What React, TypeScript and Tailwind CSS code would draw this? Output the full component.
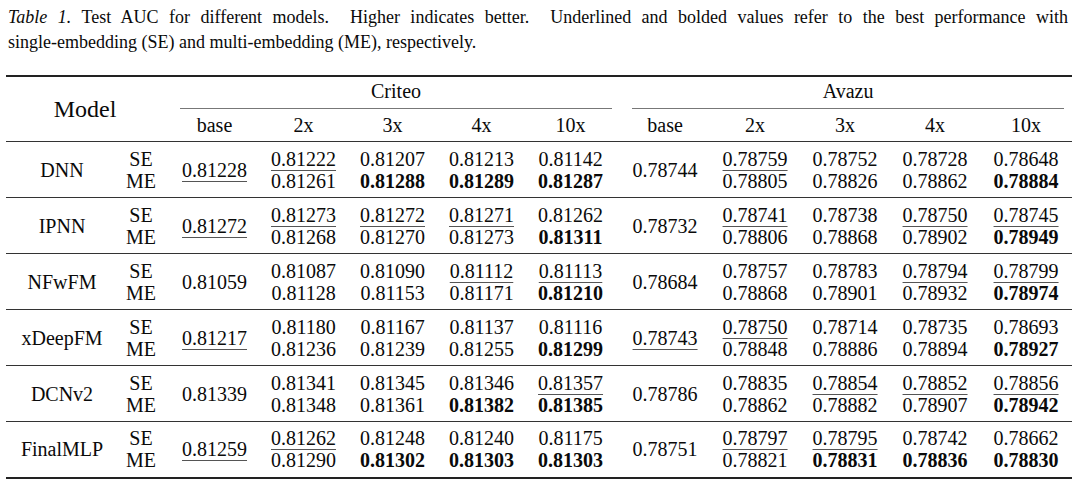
import React from "react";

type Row = {
  name: string;
  cBase: string;
  cSE: string[];
  cME: string[];
  aBase: string;
  aSE: string[];
  aME: string[];
};

const rows: Row[] = [
  {
    name: "DNN",
    cBase: "_0.81228",
    cSE: ["_0.81222", "0.81207", "0.81213", "0.81142"],
    cME: ["0.81261", "*0.81288", "*0.81289", "*0.81287"],
    aBase: "0.78744",
    aSE: ["_0.78759", "0.78752", "0.78728", "0.78648"],
    aME: ["0.78805", "0.78826", "0.78862", "*0.78884"],
  },
  {
    name: "IPNN",
    cBase: "_0.81272",
    cSE: ["_0.81273", "_0.81272", "_0.81271", "0.81262"],
    cME: ["0.81268", "0.81270", "0.81273", "*0.81311"],
    aBase: "0.78732",
    aSE: ["_0.78741", "0.78738", "_0.78750", "_0.78745"],
    aME: ["0.78806", "0.78868", "0.78902", "*0.78949"],
  },
  {
    name: "NFwFM",
    cBase: "0.81059",
    cSE: ["0.81087", "0.81090", "_0.81112", "_0.81113"],
    cME: ["0.81128", "0.81153", "0.81171", "*0.81210"],
    aBase: "0.78684",
    aSE: ["0.78757", "0.78783", "_0.78794", "_0.78799"],
    aME: ["0.78868", "0.78901", "0.78932", "*0.78974"],
  },
  {
    name: "xDeepFM",
    cBase: "_0.81217",
    cSE: ["0.81180", "0.81167", "0.81137", "0.81116"],
    cME: ["0.81236", "0.81239", "0.81255", "*0.81299"],
    aBase: "_0.78743",
    aSE: ["_0.78750", "0.78714", "0.78735", "0.78693"],
    aME: ["0.78848", "0.78886", "0.78894", "*0.78927"],
  },
  {
    name: "DCNv2",
    cBase: "0.81339",
    cSE: ["0.81341", "0.81345", "0.81346", "_0.81357"],
    cME: ["0.81348", "0.81361", "*0.81382", "*0.81385"],
    aBase: "0.78786",
    aSE: ["0.78835", "_0.78854", "_0.78852", "_0.78856"],
    aME: ["0.78862", "0.78882", "0.78907", "*0.78942"],
  },
  {
    name: "FinalMLP",
    cBase: "_0.81259",
    cSE: ["_0.81262", "0.81248", "0.81240", "0.81175"],
    cME: ["0.81290", "*0.81302", "*0.81303", "*0.81303"],
    aBase: "0.78751",
    aSE: ["_0.78797", "_0.78795", "0.78742", "0.78662"],
    aME: ["0.78821", "*0.78831", "*0.78836", "*0.78830"],
  },
];

function Val({ v }: { v: string }) {
  if (v.startsWith("_")) {
    return (
      <span className="underline decoration-[#555] decoration-1 underline-offset-[4px]">
        {v.slice(1)}
      </span>
    );
  }
  if (v.startsWith("*")) {
    return <span className="font-bold">{v.slice(1)}</span>;
  }
  return <span>{v}</span>;
}

function Pair({ se, me }: { se: string; me: string }) {
  return (
    <td className="p-0 text-center align-middle">
      <div className="leading-[22px]">
        <Val v={se} />
      </div>
      <div className="leading-[22px]">
        <Val v={me} />
      </div>
    </td>
  );
}

const cHeads = ["base", "2x", "3x", "4x", "10x"];

export default function App() {
  return (
    <div
      className="w-[1080px] h-[502px] bg-white text-[#0a0a0a] overflow-hidden"
      style={{ fontFamily: '"Liberation Serif", "Times New Roman", serif' }}
    >
      <div className="ml-[8px] mt-[5px] w-[1060px] text-[18px] leading-[25px]">
        <p className="text-justify [text-align-last:justify] whitespace-nowrap">
          <i>Table 1.</i> Test AUC for different models.&nbsp; Higher indicates better.&nbsp; Underlined
          and bolded values refer to the best performance with
        </p>
        <p>single-embedding (SE) and multi-embedding (ME), respectively.</p>
      </div>
      <table className="ml-[6px] mt-[20px] w-[1066px] table-fixed border-collapse text-[20px]">
        <colgroup>
          <col className="w-[112px]" />
          <col className="w-[52px]" />
          <col className="w-[89px]" />
          <col className="w-[89px]" />
          <col className="w-[89px]" />
          <col className="w-[89px]" />
          <col className="w-[89px]" />
          <col className="w-[5px]" />
          <col className="w-[90px]" />
          <col className="w-[90px]" />
          <col className="w-[90px]" />
          <col className="w-[90px]" />
          <col className="w-[92px]" />
        </colgroup>
        <thead>
          <tr className="border-t-2 border-[#222]">
            <th
              rowSpan={2}
              colSpan={2}
              className="p-0 font-normal text-center align-middle pr-[6px] text-[24px]"
            >
              Model
            </th>
            <th colSpan={5} className="p-0 font-normal">
              <div className="ml-[10px] mr-[3px] pt-[3px] pb-[6px] leading-[22px] border-b border-[#777]">
                Criteo
              </div>
            </th>
            <th className="p-0" />
            <th colSpan={5} className="p-0 font-normal">
              <div className="ml-[12px] mr-[8px] pt-[3px] pb-[6px] leading-[22px] border-b border-[#777]">
                Avazu
              </div>
            </th>
          </tr>
          <tr className="border-b border-[#333]">
            {cHeads.map((h) => (
              <th key={"c" + h} className="p-0 pt-[5px] pb-[5px] leading-[22px] font-normal text-center">
                {h}
              </th>
            ))}
            <th className="p-0" />
            {cHeads.map((h) => (
              <th key={"a" + h} className="p-0 pt-[5px] pb-[5px] leading-[22px] font-normal text-center">
                {h}
              </th>
            ))}
          </tr>
        </thead>
        <tbody>
          {rows.map((r, i) => (
            <tr
              key={r.name}
              className={
                "h-[56px] " +
                (i === rows.length - 1 ? "border-b-2 border-[#222]" : "border-b border-[#333]")
              }
            >
              <td className="p-0 text-center align-middle">{r.name}</td>
              <td className="p-0 text-center align-middle pr-[6px]">
                <div className="leading-[22px]">SE</div>
                <div className="leading-[22px]">ME</div>
              </td>
              <td className="p-0 text-center align-middle">
                <Val v={r.cBase} />
              </td>
              {r.cSE.map((v, k) => (
                <Pair key={"c" + k} se={v} me={r.cME[k]} />
              ))}
              <td className="p-0" />
              <td className="p-0 text-center align-middle">
                <Val v={r.aBase} />
              </td>
              {r.aSE.map((v, k) => (
                <Pair key={"a" + k} se={v} me={r.aME[k]} />
              ))}
            </tr>
          ))}
        </tbody>
      </table>
    </div>
  );
}
